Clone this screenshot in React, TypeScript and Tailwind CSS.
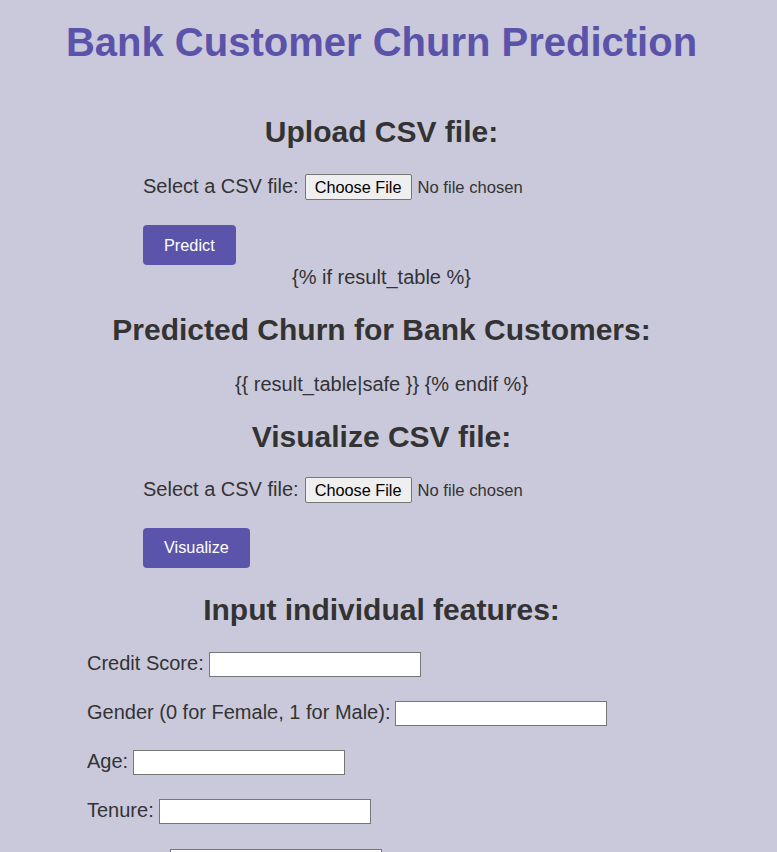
import React from "react";

const features = [
  "Credit Score",
  "Gender (0 for Female, 1 for Male)",
  "Age",
  "Tenure",
  "Balance",
  "Number of Products",
  "Has Credit Card (0 or 1)",
  "Is Active Member (0 or 1)",
  "Estimated Salary",
];

const FileRow = ({ className }: { className: string }) => (
  <div className={`flex items-baseline pl-[143px] ${className}`}>
    <label className="text-[20px] leading-6">Select a CSV file:</label>
    <span className="ml-[6px] h-[26px] px-[9px] py-[3px] border border-[#767676] bg-[#efefef] rounded-[2px] text-[16.3px] leading-[18px] text-black">
      Choose File
    </span>
    <span className="ml-[6px] text-[16.6px] leading-[18px] text-[#333]">No file chosen</span>
  </div>
);

export default function App() {
  return (
    <div className="min-h-screen bg-[#cac9db] text-[#333] font-['Liberation_Sans',Arial,sans-serif]">
      <div className="flex flex-col w-[763px] pt-[19px] pb-10">
        <h1 className="text-[40px] leading-[46px] font-bold text-center text-[#5b53aa]">
          Bank Customer Churn Prediction
        </h1>

        {/* upload form */}
        <h2 className="mt-[49px] text-[30px] leading-[36px] font-bold text-center">Upload CSV file:</h2>
        <FileRow className="mt-6" />
        <div className="pl-[143px] mt-[25px]">
          <button className="h-10 px-[21px] rounded-[4px] bg-[#5a55aa] text-white text-[16.3px]">Predict</button>
        </div>
        <p className="mt-[1px] text-[20px] leading-[22px] text-center">{"{% if result_table %}"}</p>
        <h2 className="mt-6 text-[30px] leading-[36px] font-bold text-center">
          Predicted Churn for Bank Customers:
        </h2>
        <p className="mt-6 text-[20px] leading-6 text-center">{"{{ result_table|safe }} {% endif %}"}</p>

        {/* visualize form */}
        <h2 className="mt-[23px] text-[30px] leading-[36px] font-bold text-center">Visualize CSV file:</h2>
        <FileRow className="mt-[22px]" />
        <div className="pl-[143px] mt-[24.5px]">
          <button className="h-10 px-[21px] rounded-[4px] bg-[#5a55aa] text-white text-[16.3px]">Visualize</button>
        </div>

        {/* individual features */}
        <h2 className="mt-6 text-[30px] leading-[36px] font-bold text-center">Input individual features:</h2>
        <div className="mt-6 pl-[87px] flex flex-col gap-[24.33px]">
          {features.map((f) => (
            <div key={f} className="flex items-start h-[25px]">
              <label className="text-[20px] leading-[22px]">{f}:</label>
              <input
                type="text"
                className="ml-[5px] w-[212px] h-[25px] border border-[#767676] bg-white outline-none"
              />
            </div>
          ))}
        </div>
      </div>
    </div>
  );
}
